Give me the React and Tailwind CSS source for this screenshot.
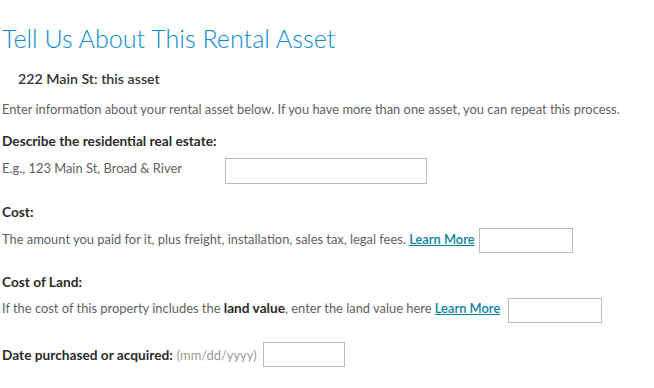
export default function App() {
  const font = { fontFamily: "Lato, 'Noto Sans', sans-serif" };
  return (
    <div className="w-[654px] h-[388px] bg-white overflow-hidden px-[2px] text-[#5f5f5f]" style={font}>
      <h1 className="mt-[24px] text-[25.1px] leading-[28px] font-light text-[#0a8bd0]">
        Tell Us About This Rental Asset
      </h1>
      <div className="mt-[19px] pl-[16px] text-[14.2px] leading-[16px] font-semibold text-[#333]">
        222 Main St: this asset
      </div>
      <p className="mt-[14px] text-[12.9px] leading-[16px] text-[#5f5f5f]">
        Enter information about your rental asset below. If you have more than one asset, you can repeat this process.
      </p>
      <div className="mt-[16px] text-[13.7px] leading-[16px] font-bold text-[#2b2b2b]">
        Describe the residential real estate:
      </div>
      <div className="mt-[9px] flex items-start">
        <span className="mt-[2px] w-[223px] text-[12.9px] leading-[16px] text-[#5f5f5f]">E.g., 123 Main St, Broad &amp; River</span>
        <input className="w-[202px] h-[26px] border border-[#bababa] bg-white outline-none" />
      </div>
      <div className="mt-[20px] text-[13.7px] leading-[16px] font-bold text-[#2b2b2b]">Cost:</div>
      <div className="mt-[8px] flex items-start">
        <span className="mt-[3px] text-[12.9px] leading-[16px] text-[#5f5f5f]">
          The amount you paid for it, plus freight, installation, sales tax, legal fees.{" "}
          <a href="#" className="text-[#0a7fa0] underline font-semibold">Learn More</a>
        </span>
        <input className="ml-[4px] w-[94px] h-[25px] border border-[#bababa] bg-white outline-none" />
      </div>
      <div className="mt-[21px] text-[13.7px] leading-[16px] font-bold text-[#2b2b2b]">Cost of Land:</div>
      <div className="mt-[8px] flex items-start">
        <span className="mt-[2px] text-[12.9px] leading-[16px] text-[#5f5f5f]">
          If the cost of this property includes the <b className="text-[#2b2b2b] text-[13.7px]">land value</b>, enter the land value here{" "}
          <a href="#" className="text-[#0a7fa0] underline font-semibold">Learn More</a>
        </span>
        <input className="ml-[8px] w-[94px] h-[25px] border border-[#bababa] bg-white outline-none" />
      </div>
      <div className="mt-[19px] flex items-center">
        <span className="text-[13.7px] leading-[16px] font-bold text-[#2b2b2b]">Date purchased or acquired:</span>
        <span className="ml-[4px] text-[12.9px] leading-[16px] text-[#9a9a9a]">(mm/dd/yyyy)</span>
        <input className="ml-[6px] w-[82px] h-[25px] border border-[#bababa] bg-white outline-none" />
      </div>
    </div>
  );
}
